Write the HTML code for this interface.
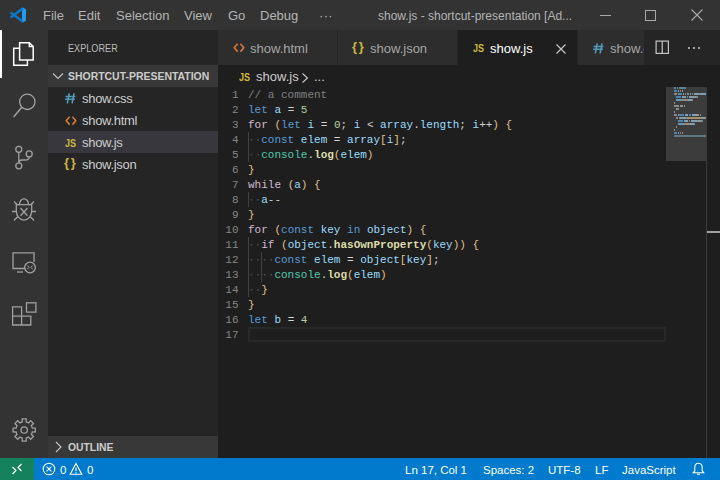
<!DOCTYPE html>
<html><head><meta charset="utf-8">
<style>
*{margin:0;padding:0;box-sizing:border-box}
html,body{width:720px;height:480px;overflow:hidden;background:#1e1e1e;font-family:"Liberation Sans",sans-serif}
.a{position:absolute}
#title{left:0;top:0;width:720px;height:30px;background:#333333}
.menu{top:1px;height:30px;line-height:30px;font-size:13px;color:#b4b4b4;white-space:nowrap}
#act{left:0;top:30px;width:48px;height:428px;background:#333333}
#side{left:48px;top:30px;width:170px;height:428px;background:#252526}
#tabs{left:218px;top:30px;width:502px;height:35px;background:#252526}
.tab{top:0;height:35px;background:#2d2d2d;border-right:1px solid #252526;font-size:13px;line-height:35px;color:#969696;white-space:nowrap;overflow:hidden}
#status{left:0;top:458px;width:720px;height:22px;background:#007acc;color:#fff;font-size:12px;line-height:22px;white-space:nowrap}
.st{top:1px;height:22px;font-size:11.5px}
.code{font-family:"Liberation Mono",monospace;font-size:11px;line-height:15px;white-space:pre;color:#d4d4d4}
.ln{font-family:"Liberation Mono",monospace;font-size:11px;line-height:15px;color:#858585;text-align:right;width:20px}
.k{color:#569cd6}.c{color:#808080}.v{color:#9cdcfe}.n{color:#b5cea8}.x{color:#d2b9d2}.t{color:#4ec9b0}.f{color:#dcdcaa;font-weight:bold}.p{color:#e2c08d}
.fi{left:34px;height:22px;line-height:23px;font-size:13px;color:#cccccc;white-space:nowrap;letter-spacing:-0.3px}
.tl{top:1px;height:35px;line-height:35px;font-size:13px;color:#a6a6a6;white-space:nowrap}
.tic{top:0;height:35px;line-height:35px;font-size:12px;font-weight:bold;white-space:nowrap}
#editor{left:218px;top:65px;width:502px;height:393px}
.ln{width:20.5px}
</style></head><body>
<!-- title bar -->
<div id="title" class="a">
  <svg class="a" style="left:10px;top:7px" width="16" height="16" viewBox="0 0 16 16">
    <path d="M12 0.3 L16 2.2 L16 13.8 L12 15.7 Z" fill="#1f9cf0"/>
    <path d="M12.6 1.6 L0.6 10.6" stroke="#0a78c8" stroke-width="2.5"/>
    <path d="M12.6 14.4 L0.6 5.4" stroke="#0a78c8" stroke-width="2.5"/>
  </svg>
  <div class="a menu" style="left:43px">File</div>
  <div class="a menu" style="left:78px">Edit</div>
  <div class="a menu" style="left:116px">Selection</div>
  <div class="a menu" style="left:184px">View</div>
  <div class="a menu" style="left:228px">Go</div>
  <div class="a menu" style="left:260px">Debug</div>
  <div class="a menu" style="left:319px;letter-spacing:0.3px">···</div>
  <div class="a menu" style="left:378px;font-size:12px;color:#b4b4b4">show.js - shortcut-presentation [Ad...</div>
  <div class="a" style="left:600px;top:15px;width:11px;height:1px;background:#a8a8a8"></div>
  <div class="a" style="left:645px;top:10px;width:11px;height:11px;border:1px solid #a8a8a8"></div>
  <svg class="a" style="left:691px;top:9px" width="12" height="12" viewBox="0 0 12 12"><path d="M0.5 0.5L11.5 11.5M11.5 0.5L0.5 11.5" stroke="#a8a8a8" stroke-width="1.1"/></svg>
</div>

<!-- activity bar -->
<div id="act" class="a">
  <div class="a" style="left:0;top:0;width:2px;height:48px;background:#ffffff"></div>
  <svg class="a" style="left:0;top:0" width="48" height="428" viewBox="0 30 48 428" fill="none" stroke="#a0a0a0" stroke-width="1.3">
    <!-- explorer -->
    <g stroke="#ffffff" stroke-width="1.5">
      <path d="M19.6 42.7 H29.3 L33.2 46.6 V59.9 H19.6 Z"/>
      <path d="M29.3 42.7 V46.6 H33.2"/>
      <path d="M19.6 48.2 H13.7 V65.2 H27.4 V59.9"/>
    </g>
    <!-- search -->
    <circle cx="27.3" cy="101.8" r="7.7"/>
    <path d="M21.8 107.3 L13.6 117" stroke-width="1.5"/>
    <!-- scm -->
    <circle cx="18.8" cy="149.3" r="3"/>
    <circle cx="29.2" cy="153.9" r="3"/>
    <circle cx="18.8" cy="165.8" r="3"/>
    <path d="M18.8 152.3 V162.8"/>
    <path d="M29.2 156.9 Q29.2 160 25 160 H22 Q18.8 160 18.8 162.8"/>
    <!-- debug -->
    <path d="M19.4 204.6 A4.6 5.8 0 0 1 28.6 204.6"/>
    <path d="M16.3 204.6 H31.7 V210.8 A7.7 9.3 0 0 1 16.3 210.8 Z"/>
    <path d="M20.5 208 L27.5 215.8 M27.5 208 L20.5 215.8"/>
    <path d="M14 201.5 L17.6 205 M34 201.5 L30.4 205 M12 211.5 H16.3 M36 211.5 H31.7 M14 220.5 L17.6 216.8 M34 220.5 L30.4 216.8"/>
    <!-- remote -->
    <path d="M25.5 268.5 H13 V252.8 H34 V262"/>
    <path d="M17 272 H23"/>
    <circle cx="30" cy="267.5" r="5.3"/>
    <path d="M27.3 265.6 L29.1 267.4 L27.3 269.2 M32.7 265.6 L30.9 267.4 L32.7 269.2" stroke-width="1"/>
    <!-- extensions -->
    <rect x="26.5" y="302.8" width="9.4" height="9.3"/>
    <path d="M12.6 306.9 H21.6 V325 H12.6 Z M12.6 316.2 H30.8 V325 H21.6"/>
    <!-- gear -->
    <path d="M21.03 422.33 L22.19 421.95 L22.24 418.87 L26.16 418.87 L26.21 421.95 L27.38 422.33 L28.47 422.89 L30.68 420.74 L33.46 423.52 L31.31 425.73 L31.87 426.83 L32.25 427.99 L35.33 428.04 L35.33 431.96 L32.25 432.01 L31.87 433.18 L31.31 434.27 L33.46 436.48 L30.68 439.26 L28.47 437.11 L27.37 437.67 L26.21 438.05 L26.16 441.13 L22.24 441.13 L22.19 438.05 L21.02 437.67 L19.93 437.11 L17.72 439.26 L14.94 436.48 L17.09 434.27 L16.53 433.17 L16.15 432.01 L13.07 431.96 L13.07 428.04 L16.15 427.99 L16.53 426.82 L17.09 425.73 L14.94 423.52 L17.72 420.74 L19.93 422.89 Z"/>
    <circle cx="24.2" cy="430" r="3.2"/>
  </svg>
</div>

<!-- sidebar -->
<div id="side" class="a">
  <div class="a" style="left:20px;top:1px;height:35px;line-height:35px;font-size:11px;color:#bbbbbb;transform-origin:0 50%;transform:scaleX(0.83);white-space:nowrap">EXPLORER</div>
  <div class="a" style="left:0;top:35px;width:170px;height:22px;background:#383838"></div>
  <svg class="a" style="left:2px;top:35px" width="16" height="22" viewBox="0 0 16 22" fill="none" stroke="#c5c5c5" stroke-width="1.1"><path d="M3 8.5 L8 13.5 L13 8.5"/></svg>
  <div class="a" style="left:20px;top:35px;height:22px;line-height:22px;font-size:11px;font-weight:bold;color:#cccccc;transform-origin:0 50%;transform:scaleX(0.95);white-space:nowrap">SHORTCUT-PRESENTATION</div>
  <div class="a" style="left:0;top:101px;width:170px;height:22px;background:#37373d"></div>
  <div class="a fi" style="top:57px">show.css</div>
  <div class="a fi" style="top:79px">show.html</div>
  <div class="a fi" style="top:101px">show.js</div>
  <div class="a fi" style="top:123px">show.json</div>
  <svg class="a" style="left:16.7px;top:63px" width="11" height="11" viewBox="0 0 11 11" fill="none" stroke="#519aba" stroke-width="1.6"><path d="M4.2 0.3 L2.3 10.3 M9.0 0.3 L7.1 10.3 M0.6 3.5 H10.4 M0.1 6.3 H9.9"/></svg>
  <svg class="a" style="left:16.8px;top:85.5px" width="12" height="10" viewBox="0 0 12 10" fill="none" stroke="#d27a3c" stroke-width="1.6"><path d="M4.6 0.8 L1.2 4.7 L4.6 8.6 M7.4 0.8 L10.8 4.7 L7.4 8.6"/></svg>
  <div class="a" style="left:17px;top:108px;height:8px;line-height:8px;font-size:11px;font-weight:bold;color:#d1b83a;transform-origin:0 0;transform:scaleX(0.82);white-space:nowrap"><span style="position:relative;top:0.5px">JS</span></div>
  <div class="a" style="left:16px;top:127.3px;height:12px;line-height:12px;font-size:13px;font-weight:bold;color:#cdb83c;white-space:nowrap;letter-spacing:-1px">{ }</div>
  <div class="a" style="left:0;top:406px;width:170px;height:22px;background:#383838"></div>
  <svg class="a" style="left:2px;top:406px" width="16" height="22" viewBox="0 0 16 22" fill="none" stroke="#c5c5c5" stroke-width="1.1"><path d="M6 6 L11 11 L6 16"/></svg>
  <div class="a" style="left:20px;top:406px;height:22px;line-height:22px;font-size:11px;font-weight:bold;color:#cccccc;white-space:nowrap;transform-origin:0 50%;transform:scaleX(0.94)">OUTLINE</div>
</div>

<!-- tabs -->
<div id="tabs" class="a">
  <div class="a tab" style="left:0;width:120px"></div>
  <svg class="a" style="left:14.6px;top:12.8px" width="12" height="10" viewBox="0 0 12 10" fill="none" stroke="#d27a3c" stroke-width="1.6"><path d="M4.6 0.8 L1.2 4.7 L4.6 8.6 M7.4 0.8 L10.8 4.7 L7.4 8.6"/></svg>
  <div class="a tl" style="left:32px">show.html</div>
  <div class="a tab" style="left:120px;width:120px"></div>
  <div class="a" style="left:134px;top:10.5px;height:12px;line-height:12px;font-size:13px;font-weight:bold;color:#cdb83c;white-space:nowrap;letter-spacing:-1px">{ }</div>
  <div class="a tl" style="left:152px">show.json</div>
  <div class="a tab" style="left:240px;width:120px;background:#1e1e1e;border-right-color:#252526"></div>
  <div class="a" style="left:254.8px;top:13.8px;height:8px;line-height:8px;font-size:11px;font-weight:bold;color:#d1b83a;transform-origin:0 0;transform:scaleX(0.82);white-space:nowrap"><span style="position:relative;top:0.5px">JS</span></div>
  <div class="a tl" style="left:272px;color:#ffffff">show.js</div>
  <svg class="a" style="left:338px;top:14px" width="10" height="10" viewBox="0 0 10 10" fill="none" stroke="#c5c5c5" stroke-width="1.2"><path d="M0.5 0.5 L9.5 9.5 M9.5 0.5 L0.5 9.5"/></svg>
  <div class="a tab" style="left:360px;width:66px;border-right:0"></div>
  <svg class="a" style="left:375px;top:13px" width="11" height="11" viewBox="0 0 11 11" fill="none" stroke="#519aba" stroke-width="1.6"><path d="M4.2 0.3 L2.3 10.3 M9.0 0.3 L7.1 10.3 M0.6 3.5 H10.4 M0.1 6.3 H9.9"/></svg>
  <div class="a tl" style="left:392px;width:34px;overflow:hidden">show.css</div>
  <svg class="a" style="left:437px;top:10px" width="15" height="15" viewBox="0 0 15 15" fill="none" stroke="#c5c5c5" stroke-width="1.2"><rect x="1.1" y="1.1" width="12.3" height="12.3"/><path d="M7.25 1.1 V13.4"/></svg>
  <svg class="a" style="left:469px;top:16px" width="14" height="4" viewBox="0 0 14 4" fill="#c5c5c5"><circle cx="2" cy="2" r="1"/><circle cx="7" cy="2" r="1"/><circle cx="12" cy="2" r="1"/></svg>
</div>

<div id="editor" class="a">
  <div class="a" style="left:20.8px;top:7.3px;height:8px;line-height:8px;font-size:10.5px;font-weight:bold;color:#d1b83a;transform-origin:0 0;transform:scaleX(0.86);white-space:nowrap"><span style="position:relative;top:0.5px">JS</span></div>
  <div class="a" style="left:38px;top:1px;height:22px;line-height:22px;font-size:13px;color:#cccccc;white-space:nowrap">show.js</div>
  <svg class="a" style="left:82px;top:6.5px" width="10" height="12" viewBox="0 0 10 12" fill="none" stroke="#cccccc" stroke-width="1.1"><path d="M2.5 1.5 L7.5 6 L2.5 10.5"/></svg>
  <div class="a" style="left:96px;top:1px;height:22px;line-height:22px;font-size:13px;color:#cccccc">...</div>
  <div class="a" style="left:30px;top:262px;width:418px;height:15px;border:2px solid #282828"></div>
  <svg class="a" style="left:0;top:0" width="502" height="393">
  <rect x="448" y="22" width="40" height="74" fill="#3c3c3c"/>
  <rect x="456" y="22" width="2" height="2" fill="#5f8399"/><rect x="459" y="22" width="1" height="2" fill="#5f8399"/><rect x="461" y="22" width="7" height="2" fill="#5f8399"/><rect x="456" y="25" width="3" height="2" fill="#4a85b4"/><rect x="460" y="25" width="1" height="2" fill="#7e9fb4"/><rect x="462" y="25" width="1" height="2" fill="#858585"/><rect x="464" y="25" width="1" height="2" fill="#8f8f85"/><rect x="456" y="28" width="3" height="2" fill="#8c8a84"/><rect x="460" y="28" width="1" height="2" fill="#8c8a84"/><rect x="461" y="28" width="3" height="2" fill="#4a85b4"/><rect x="465" y="28" width="1" height="2" fill="#7e9fb4"/><rect x="467" y="28" width="1" height="2" fill="#858585"/><rect x="469" y="28" width="1" height="2" fill="#8f8f85"/><rect x="470" y="28" width="1" height="2" fill="#858585"/><rect x="472" y="28" width="1" height="2" fill="#7e9fb4"/><rect x="474" y="28" width="1" height="2" fill="#858585"/><rect x="476" y="28" width="5" height="2" fill="#7e9fb4"/><rect x="481" y="28" width="1" height="2" fill="#858585"/><rect x="482" y="28" width="6" height="2" fill="#7e9fb4"/><rect x="458" y="31" width="5" height="2" fill="#4a85b4"/><rect x="464" y="31" width="4" height="2" fill="#7e9fb4"/><rect x="469" y="31" width="1" height="2" fill="#858585"/><rect x="471" y="31" width="5" height="2" fill="#7e9fb4"/><rect x="476" y="31" width="1" height="2" fill="#8c8a84"/><rect x="477" y="31" width="1" height="2" fill="#7e9fb4"/><rect x="478" y="31" width="1" height="2" fill="#8c8a84"/><rect x="479" y="31" width="1" height="2" fill="#858585"/><rect x="458" y="34" width="7" height="2" fill="#6d97ad"/><rect x="465" y="34" width="1" height="2" fill="#858585"/><rect x="466" y="34" width="3" height="2" fill="#a88f6e"/><rect x="469" y="34" width="1" height="2" fill="#8c8a84"/><rect x="470" y="34" width="4" height="2" fill="#7e9fb4"/><rect x="474" y="34" width="1" height="2" fill="#8c8a84"/><rect x="456" y="37" width="1" height="2" fill="#8c8a84"/><rect x="456" y="40" width="5" height="2" fill="#8c8a84"/><rect x="462" y="40" width="1" height="2" fill="#8c8a84"/><rect x="463" y="40" width="1" height="2" fill="#7e9fb4"/><rect x="464" y="40" width="1" height="2" fill="#8c8a84"/><rect x="466" y="40" width="1" height="2" fill="#8c8a84"/><rect x="458" y="43" width="1" height="2" fill="#7e9fb4"/><rect x="459" y="43" width="2" height="2" fill="#858585"/><rect x="456" y="46" width="1" height="2" fill="#8c8a84"/><rect x="456" y="49" width="3" height="2" fill="#8c8a84"/><rect x="460" y="49" width="1" height="2" fill="#8c8a84"/><rect x="461" y="49" width="5" height="2" fill="#4a85b4"/><rect x="467" y="49" width="3" height="2" fill="#7e9fb4"/><rect x="471" y="49" width="2" height="2" fill="#4a85b4"/><rect x="474" y="49" width="6" height="2" fill="#7e9fb4"/><rect x="480" y="49" width="1" height="2" fill="#8c8a84"/><rect x="482" y="49" width="1" height="2" fill="#8c8a84"/><rect x="458" y="52" width="2" height="2" fill="#8c8a84"/><rect x="461" y="52" width="1" height="2" fill="#8c8a84"/><rect x="462" y="52" width="6" height="2" fill="#7e9fb4"/><rect x="468" y="52" width="1" height="2" fill="#858585"/><rect x="469" y="52" width="14" height="2" fill="#a88f6e"/><rect x="483" y="52" width="1" height="2" fill="#8c8a84"/><rect x="484" y="52" width="3" height="2" fill="#7e9fb4"/><rect x="487" y="52" width="1" height="2" fill="#8c8a84"/><rect x="460" y="55" width="5" height="2" fill="#4a85b4"/><rect x="466" y="55" width="4" height="2" fill="#7e9fb4"/><rect x="471" y="55" width="1" height="2" fill="#858585"/><rect x="473" y="55" width="6" height="2" fill="#7e9fb4"/><rect x="479" y="55" width="1" height="2" fill="#8c8a84"/><rect x="480" y="55" width="3" height="2" fill="#7e9fb4"/><rect x="483" y="55" width="1" height="2" fill="#8c8a84"/><rect x="484" y="55" width="1" height="2" fill="#858585"/><rect x="460" y="58" width="7" height="2" fill="#6d97ad"/><rect x="467" y="58" width="1" height="2" fill="#858585"/><rect x="468" y="58" width="3" height="2" fill="#a88f6e"/><rect x="471" y="58" width="1" height="2" fill="#8c8a84"/><rect x="472" y="58" width="4" height="2" fill="#7e9fb4"/><rect x="476" y="58" width="1" height="2" fill="#8c8a84"/><rect x="458" y="61" width="1" height="2" fill="#8c8a84"/><rect x="456" y="64" width="1" height="2" fill="#8c8a84"/><rect x="456" y="67" width="3" height="2" fill="#4a85b4"/><rect x="460" y="67" width="1" height="2" fill="#7e9fb4"/><rect x="462" y="67" width="1" height="2" fill="#858585"/><rect x="464" y="67" width="1" height="2" fill="#8f8f85"/>
  <rect x="456" y="70" width="32" height="2" fill="#5b7a8c"/>
  <rect x="30" y="67" width="1" height="30" fill="#404040"/><rect x="30" y="127" width="1" height="15" fill="#404040"/><rect x="30" y="172" width="1" height="60" fill="#404040"/><rect x="43" y="187" width="1" height="30" fill="#404040"/><rect x="32.6" y="74" width="1.6" height="1.6" fill="#4a4a4a"/><rect x="39.2" y="74" width="1.6" height="1.6" fill="#4a4a4a"/><rect x="32.6" y="89" width="1.6" height="1.6" fill="#4a4a4a"/><rect x="39.2" y="89" width="1.6" height="1.6" fill="#4a4a4a"/><rect x="32.6" y="134" width="1.6" height="1.6" fill="#4a4a4a"/><rect x="39.2" y="134" width="1.6" height="1.6" fill="#4a4a4a"/><rect x="32.6" y="179" width="1.6" height="1.6" fill="#4a4a4a"/><rect x="39.2" y="179" width="1.6" height="1.6" fill="#4a4a4a"/><rect x="32.6" y="194" width="1.6" height="1.6" fill="#4a4a4a"/><rect x="39.2" y="194" width="1.6" height="1.6" fill="#4a4a4a"/><rect x="45.8" y="194" width="1.6" height="1.6" fill="#4a4a4a"/><rect x="52.4" y="194" width="1.6" height="1.6" fill="#4a4a4a"/><rect x="32.6" y="209" width="1.6" height="1.6" fill="#4a4a4a"/><rect x="39.2" y="209" width="1.6" height="1.6" fill="#4a4a4a"/><rect x="45.8" y="209" width="1.6" height="1.6" fill="#4a4a4a"/><rect x="52.4" y="209" width="1.6" height="1.6" fill="#4a4a4a"/><rect x="32.6" y="224" width="1.6" height="1.6" fill="#4a4a4a"/><rect x="39.2" y="224" width="1.6" height="1.6" fill="#4a4a4a"/>
  <rect x="488" y="22" width="1" height="371" fill="#3b3b3b"/>
  <rect x="489" y="166" width="13" height="2" fill="#a0a0a0"/>
</svg>
  <pre class="a ln" style="left:0;top:23px">1
2
3
4
5
6
7
8
9
10
11
12
13
14
15
16
17</pre>
  <pre class="a code" style="left:30px;top:23px"><span class="c">// a comment</span>
<span class="k">let</span> <span class="v">a</span> = <span class="n">5</span>
<span class="x">for</span> <span class="p">(</span><span class="k">let</span> <span class="v">i</span> = <span class="n">0</span>; <span class="v">i</span> &lt; <span class="v">array</span>.<span class="v">length</span>; <span class="v">i</span>++<span class="p">)</span> <span class="p">{</span>
  <span class="k">const</span> <span class="v">elem</span> = <span class="v">array</span><span class="p">[</span><span class="v">i</span><span class="p">]</span>;
  <span class="t">console</span>.<span class="f">log</span><span class="p">(</span><span class="v">elem</span><span class="p">)</span>
<span class="p">}</span>
<span class="x">while</span> <span class="p">(</span><span class="v">a</span><span class="p">)</span> <span class="p">{</span>
  <span class="v">a</span>--
<span class="p">}</span>
<span class="x">for</span> <span class="p">(</span><span class="k">const</span> <span class="v">key</span> <span class="k">in</span> <span class="v">object</span><span class="p">)</span> <span class="p">{</span>
  <span class="x">if</span> <span class="p">(</span><span class="v">object</span>.<span class="f">hasOwnProperty</span><span class="p">(</span><span class="v">key</span><span class="p">)</span><span class="p">)</span> <span class="p">{</span>
    <span class="k">const</span> <span class="v">elem</span> = <span class="v">object</span><span class="p">[</span><span class="v">key</span><span class="p">]</span>;
    <span class="t">console</span>.<span class="f">log</span><span class="p">(</span><span class="v">elem</span><span class="p">)</span>
  <span class="p">}</span>
<span class="p">}</span>
<span class="k">let</span> <span class="v">b</span> = <span class="n">4</span>
</pre>
</div>

<!-- status -->
<div id="status" class="a">
  <div class="a" style="left:0;top:0;width:34px;height:22px;background:#16825d"></div>
  <svg class="a" style="left:11px;top:5px" width="12" height="12" viewBox="0 0 12 12" fill="none" stroke="#ffffff" stroke-width="1.1"><path d="M1.5 11 L5 7.5 L1.5 4 M10.5 1 L7 4.5 L10.5 8"/></svg>
  <svg class="a" style="left:42px;top:4px" width="14" height="14" viewBox="0 0 14 14" fill="none" stroke="#ffffff" stroke-width="1.1"><circle cx="7" cy="7" r="5.8"/><path d="M4.6 4.6 L9.4 9.4 M9.4 4.6 L4.6 9.4"/></svg>
  <div class="a st" style="left:60px">0</div>
  <svg class="a" style="left:69px;top:4px" width="14" height="14" viewBox="0 0 14 14" fill="none" stroke="#ffffff" stroke-width="1.1"><path d="M7 1.5 L12.8 12.3 H1.2 Z"/><path d="M7 5.5 V9.3 M7 10.3 V11.3"/></svg>
  <div class="a st" style="left:87px">0</div>
  <div class="a st" style="left:405px">Ln 17, Col 1</div>
  <div class="a st" style="left:483px">Spaces: 2</div>
  <div class="a st" style="left:548px">UTF-8</div>
  <div class="a st" style="left:595px">LF</div>
  <div class="a st" style="left:622px">JavaScript</div>
  <svg class="a" style="left:692px;top:4px" width="13" height="14" viewBox="0 0 13 14" fill="none" stroke="#ffffff" stroke-width="1.1"><path d="M6.5 1.2 C3.8 1.2 2.8 3.2 2.8 5.5 V8.8 L1.2 10.8 H11.8 L10.2 8.8 V5.5 C10.2 3.2 9.2 1.2 6.5 1.2 Z M5 12.3 H8"/></svg>
</div>
</body></html>
